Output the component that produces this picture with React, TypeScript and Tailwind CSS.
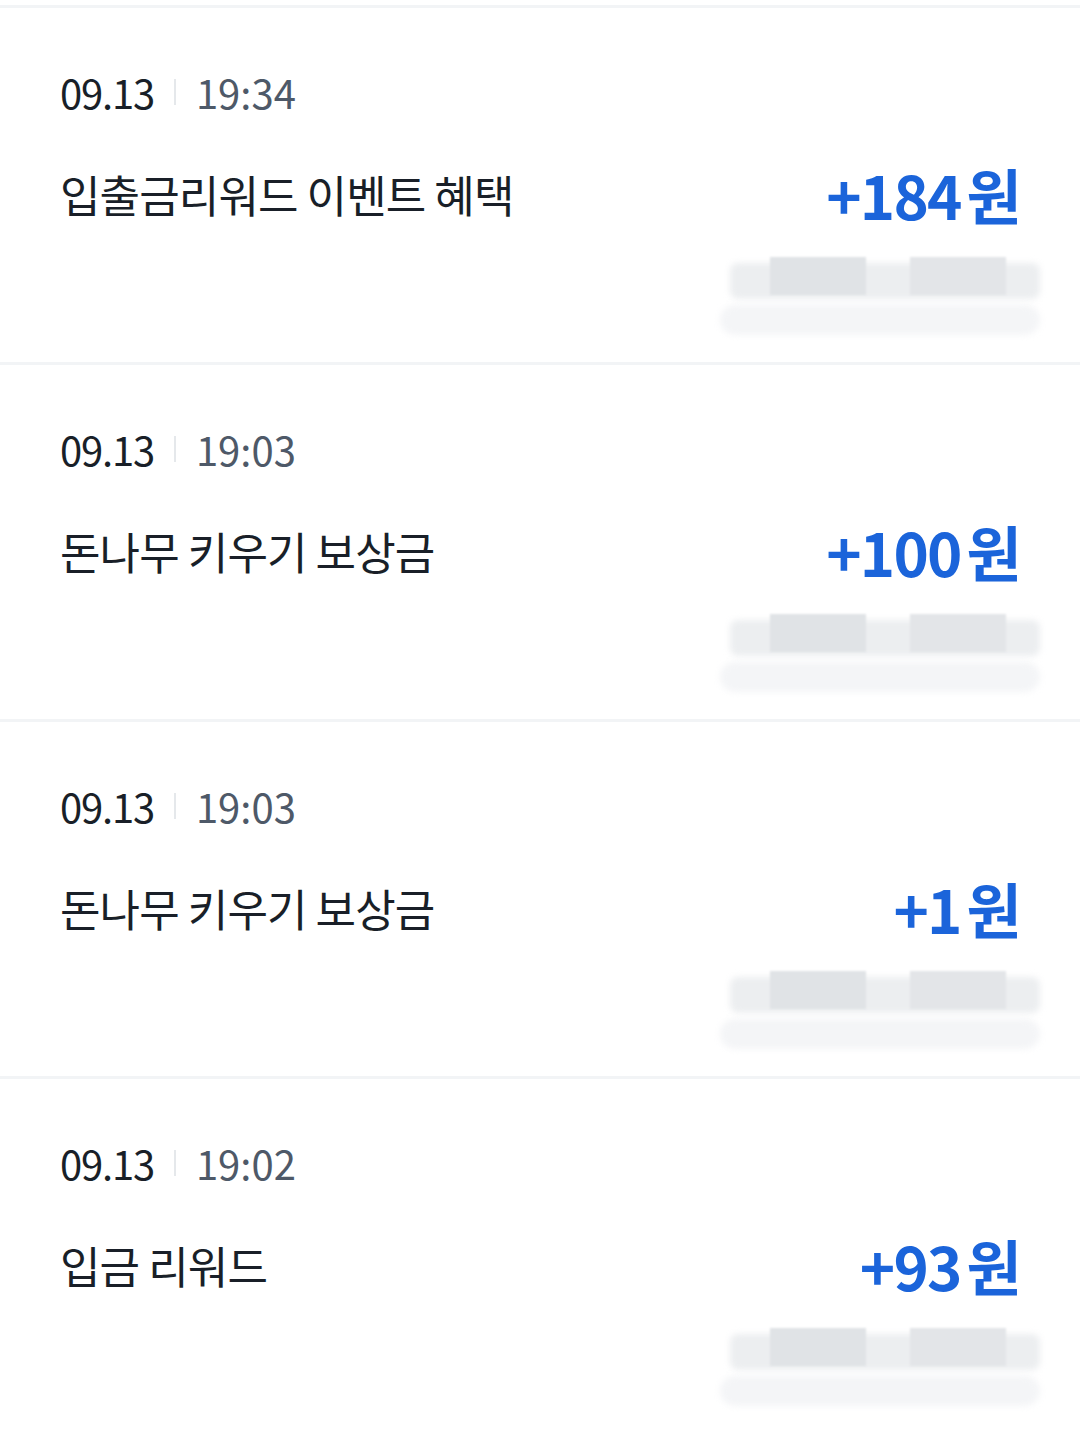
const items = [
  { date: "09.13", time: "19:34", title: "입출금리워드 이벤트 혜택", amount: "+184" },
  { date: "09.13", time: "19:03", title: "돈나무 키우기 보상금", amount: "+100" },
  { date: "09.13", time: "19:03", title: "돈나무 키우기 보상금", amount: "+1" },
  { date: "09.13", time: "19:02", title: "입금 리워드", amount: "+93" },
];

const Redacted = () => {
  return (
    <div className="relative w-[330px] h-[92px] ml-auto mr-[-30px]">
      <div className="absolute left-[10px] top-[12px] w-[310px] h-[36px] bg-[#eceef0] rounded-lg blur-[3px]" />
      <div className="absolute left-[50px] top-[6px] w-[96px] h-[38px] bg-[#e0e3e6] blur-[1px]" />
      <div className="absolute left-[190px] top-[6px] w-[96px] h-[38px] bg-[#e3e5e8] blur-[1px]" />
      <div className="absolute left-[0px] top-[54px] w-[320px] h-[30px] bg-[#f4f5f7] rounded-full blur-[3px]" />
    </div>
  );
};

export default function App() {
  return (
    <div
      className="bg-white w-[1080px] pt-[5px] text-[#191f28]"
      style={{ fontFamily: '"Noto Sans CJK KR", "Noto Sans", sans-serif' }}
    >
      {items.map((item, index) => (
        <section
          key={index}
          className="h-[357px] border-t-[3px] border-[#f2f4f6] px-[60px] pt-[60px]"
        >
          <div className="flex items-center h-[48px] text-[40px] leading-none">
            <span className="tracking-[-0.03em]">{item.date}</span>
            <span className="mx-[20px] w-[2px] h-[26px] bg-[#e5e8eb]" />
            <span className="text-[#4e5968]">{item.time}</span>
          </div>
          <div className="flex items-center justify-between h-[70px] mt-[43px]">
            <div className="text-[44px] leading-none tracking-[-0.02em]">{item.title}</div>
            <div className="text-[60px] leading-none font-bold text-[#1b64da] tracking-[-0.03em]">
              {item.amount}
              <span className="ml-[6px]">원</span>
            </div>
          </div>
          <div className="mt-[22px]">
            <Redacted />
          </div>
        </section>
      ))}
    </div>
  );
}
